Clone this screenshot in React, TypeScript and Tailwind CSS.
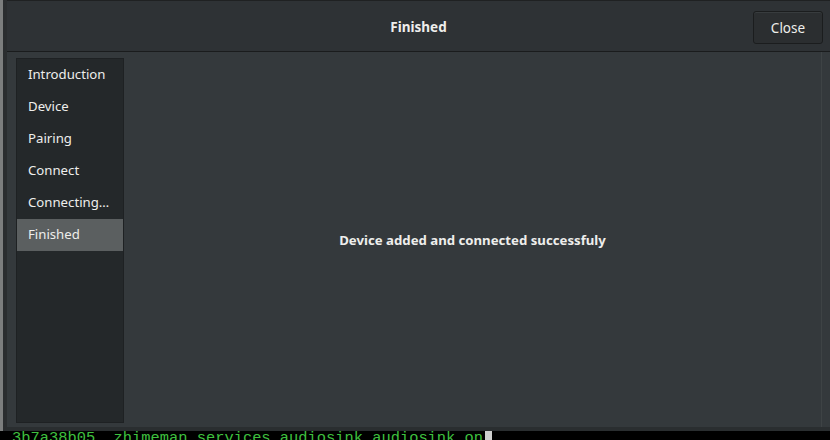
const steps = ["Introduction", "Device", "Pairing", "Connect", "Connecting…", "Finished"];

export default function App() {
  return (
    <div className="w-[830px] h-[440px] overflow-hidden bg-black flex flex-col" style={{ fontFamily: '"Noto Sans", "Open Sans", sans-serif' }}>
      <div className="flex h-[431px] shrink-0">
        <div className="w-[3px] bg-[#7c7e7e]" />
        <div className="w-[4px] bg-[#2a2d2f]" />
        <div className="flex-1 flex flex-col bg-[#2e3235] border-t border-[#1f2122]">
          {/* header */}
          <div className="h-[51px] shrink-0 flex items-center justify-center relative border-b border-[#1a1c1d] pt-[3px]">
            <span className="text-[13.5px] font-bold text-[#eeeeec]">Finished</span>
            <button className="absolute right-[7px] top-[10px] w-[70px] h-[33px] pt-[1px] rounded-[3px] bg-[#2b2e30] border border-[#1b1d1e] text-[13.5px] text-[#eeeeec] shadow-[inset_0_1px_0_#383c3e]">
              Close
            </button>
          </div>
          {/* body */}
          <div className="flex-1 flex bg-[#34393c] border-b-[4px] border-[#2a2e30] pr-[8px]">
            <div className="flex-1 flex border-r border-[#3e4345] p-[6px_0_4px_9px]">
              <div className="w-[108px] bg-[#24282a] border border-[#1e2123] flex flex-col">
                {steps.map((s, i) => (
                  <div
                    key={s}
                    className={
                      "h-[32px] flex items-center pl-[11px] pb-[1px] text-[13.2px] text-[#eeeeec] " +
                      (i === 5 ? "bg-[#5b5f60]" : "")
                    }
                  >
                    {s}
                  </div>
                ))}
              </div>
              <div className="flex-1 flex items-center justify-center">
                <span className="text-[13.2px] font-bold text-[#eeeeec]">Device added and connected successfuly</span>
              </div>
            </div>
          </div>
        </div>
      </div>
      <div className="h-[9px] overflow-hidden pl-[12px] flex items-start">
        <span className="text-[15.4px] leading-[15px] text-[#3fc13f] whitespace-pre" style={{ fontFamily: '"Liberation Mono", monospace' }}>
          3b7a38b05  zhimeman services audiosink audiosink on
        </span>
        <span className="w-[7px] h-[9px] bg-[#cfcfcf] ml-[2px]" />
      </div>
    </div>
  );
}
